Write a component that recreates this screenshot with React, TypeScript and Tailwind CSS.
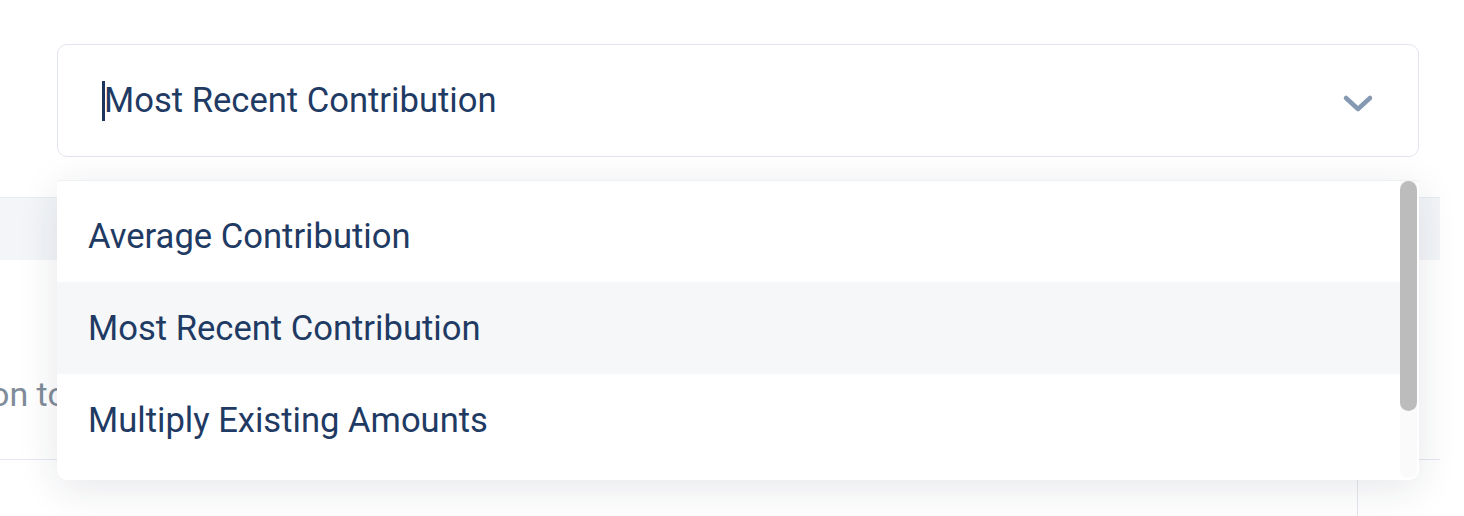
import React from "react";

export default function App() {
  const items = ["Average Contribution", "Most Recent Contribution", "Multiply Existing Amounts"];
  return (
    <div
      className="relative w-[1464px] h-[516px] overflow-hidden bg-white"
      style={{ fontFamily: "Roboto, 'Noto Sans', sans-serif" }}
    >
      {/* background content */}
      <div className="pt-[197px] w-[1440px]">
        <div className="h-[63px] bg-[#f3f5f8] border-t border-[#e8ecf2]" />
        <div className="h-[200px] border-b border-[#e3e7ee] pt-[114px]">
          <span className="block ml-[-10px] text-[34px] leading-[40px] text-[#808c9a]">on to</span>
        </div>
        <div className="flex h-[60px]">
          <div className="w-[1357px]" />
          <div className="border-l border-[#e3e7ee] flex-1" />
        </div>
      </div>

      {/* select */}
      <div className="absolute left-[57px] top-[44px] w-[1362px] h-[113px] rounded-[10px] border-[1.5px] border-[#e1e6ee] bg-white flex items-center pl-[44px] pr-[44px]">
        <span className="w-[3px] h-[40px] bg-[#1c355e] mr-[-1px]" />
        <span className="text-[34.6px] text-[#1f3b64] flex-1 leading-none">Most Recent Contribution</span>
        <svg width="32" height="20" viewBox="0 0 32 20" className="mt-[6px]">
          <path d="M4 4 L16 15 L28 4" fill="none" stroke="#8699b3" strokeWidth="4.5" strokeLinecap="round" strokeLinejoin="round" />
        </svg>
      </div>

      {/* dropdown */}
      <div className="absolute left-[57px] top-[180px] w-[1362px] h-[300px] rounded-b-[10px] rounded-t-[4px] bg-white border-t border-[#eef0f4] shadow-[0_8px_40px_rgba(30,40,60,0.11)] overflow-hidden">
        <div className="pt-[9px] pr-[19px]">
          {items.map((t, i) => (
            <div
              key={t}
              className={
                i === 1
                  ? "h-[92px] flex items-center pl-[31px] bg-[#f5f7f9]"
                  : "h-[92px] flex items-center pl-[31px]"
              }
            >
              <span className="text-[34.6px] text-[#1f3b64] leading-none">{t}</span>
            </div>
          ))}
        </div>
        <div className="absolute right-[2px] top-0 bottom-[2px] w-[17px] bg-[#fafafa] rounded-b-[8px]">
          <div className="h-[230px] w-full rounded-full bg-[#bcbcbc]" />
        </div>
      </div>
    </div>
  );
}
